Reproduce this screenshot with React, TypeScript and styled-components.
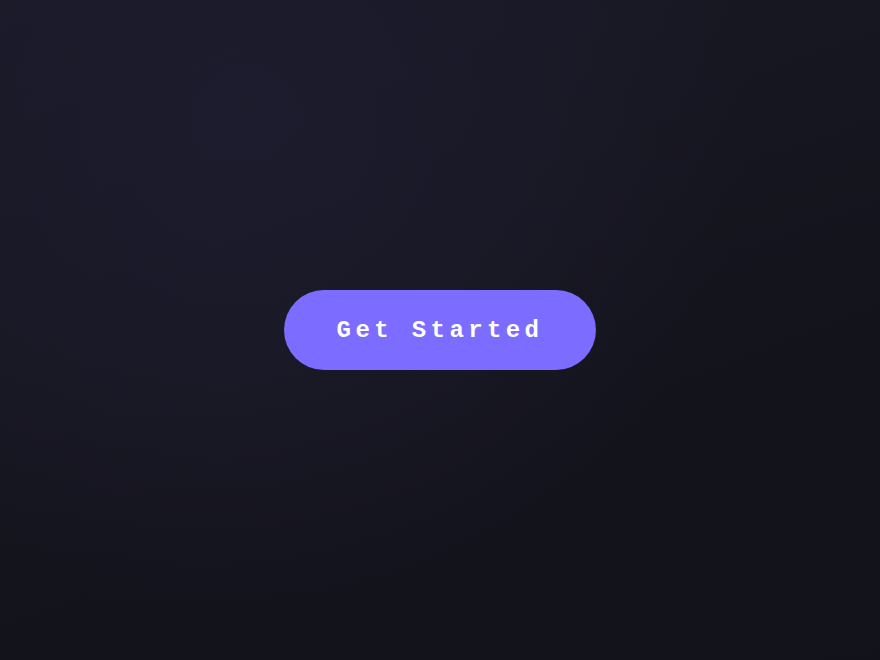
import React from "react";
import styled, { createGlobalStyle } from "styled-components";

const Global = createGlobalStyle`
  html, body, #root { margin: 0; padding: 0; height: 100%; }
  body { background: #15151e; }
`;

const Page = styled.div`
  width: 100%;
  height: 100vh;
  display: flex;
  align-items: center;
  justify-content: center;
  background:
    radial-gradient(circle at 28% 18%, #1d1c2e 0%, rgba(29, 28, 46, 0) 60%),
    linear-gradient(160deg, #1a1a27 0%, #14141d 60%, #12121a 100%);
`;

const Button = styled.button`
  width: 312px;
  height: 80px;
  border: none;
  border-radius: 40px;
  background: #7c6cff;
  color: #ffffff;
  font-family: "Courier New", "Liberation Mono", monospace;
  font-weight: 700;
  font-size: 24px;
  letter-spacing: 4.4px;
  padding: 0;
  cursor: pointer;
  display: flex;
  align-items: center;
  justify-content: center;
`;

export default function App() {
  return (
    <>
      <Global />
      <Page>
        <Button>Get Started</Button>
      </Page>
    </>
  );
}
